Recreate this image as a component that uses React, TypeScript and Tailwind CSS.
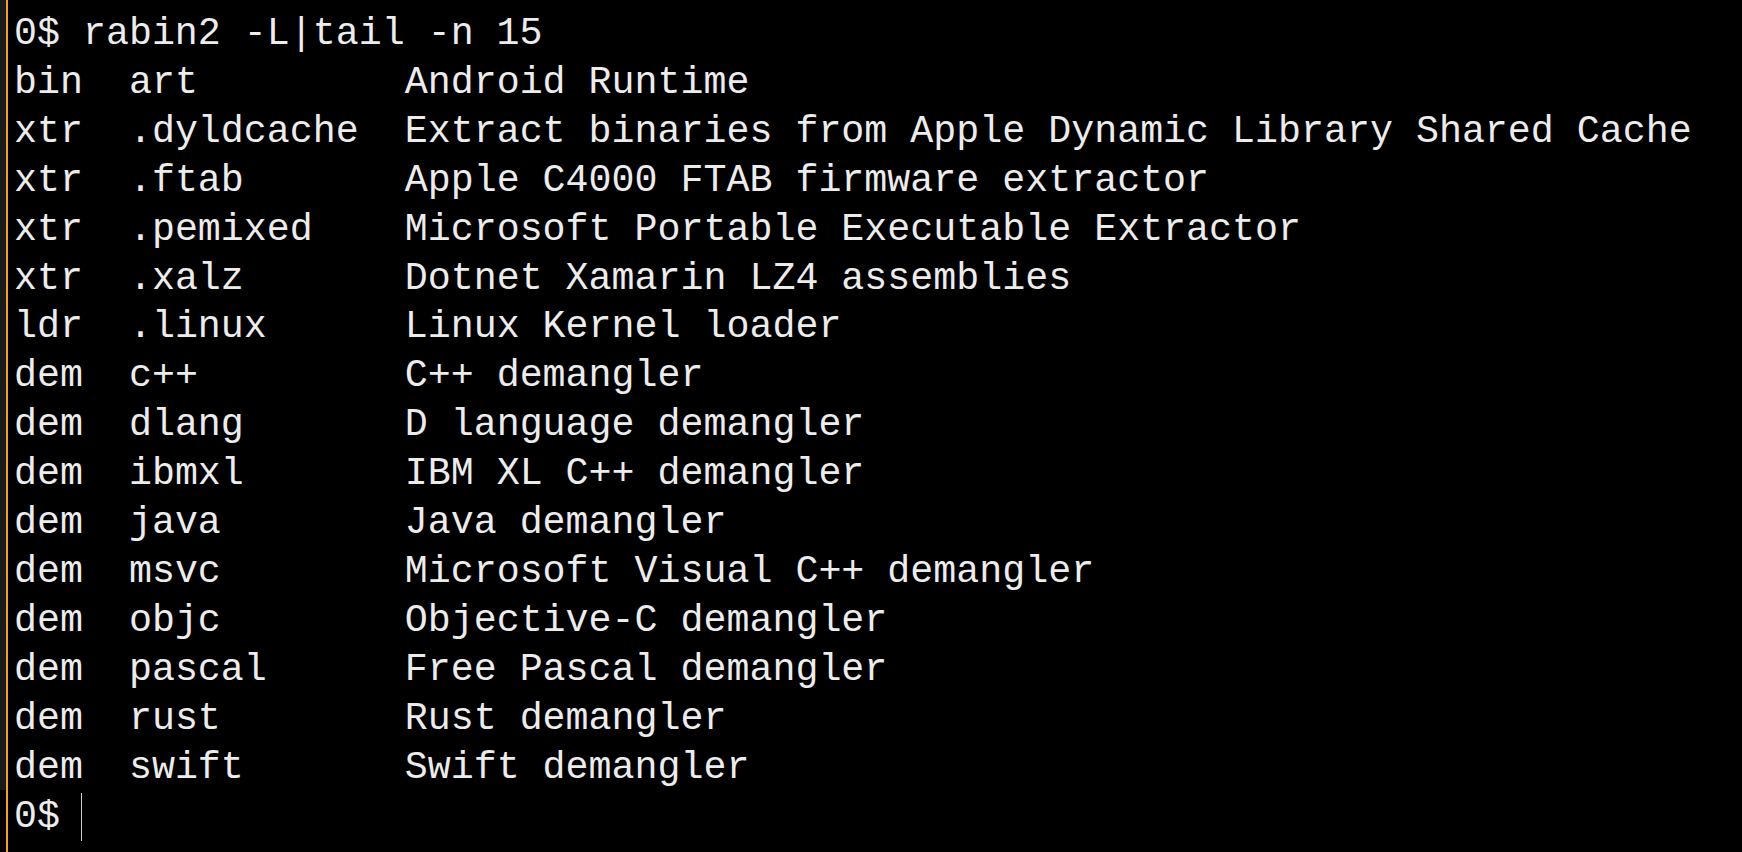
const rows: [string, string, string][] = [
  ["bin", "art", "Android Runtime"],
  ["xtr", ".dyldcache", "Extract binaries from Apple Dynamic Library Shared Cache"],
  ["xtr", ".ftab", "Apple C4000 FTAB firmware extractor"],
  ["xtr", ".pemixed", "Microsoft Portable Executable Extractor"],
  ["xtr", ".xalz", "Dotnet Xamarin LZ4 assemblies"],
  ["ldr", ".linux", "Linux Kernel loader"],
  ["dem", "c++", "C++ demangler"],
  ["dem", "dlang", "D language demangler"],
  ["dem", "ibmxl", "IBM XL C++ demangler"],
  ["dem", "java", "Java demangler"],
  ["dem", "msvc", "Microsoft Visual C++ demangler"],
  ["dem", "objc", "Objective-C demangler"],
  ["dem", "pascal", "Free Pascal demangler"],
  ["dem", "rust", "Rust demangler"],
  ["dem", "swift", "Swift demangler"],
]

export default function App() {
  return (
    <div className="flex h-[852px] w-full overflow-hidden bg-black">
      {/* gutter */}
      <div className="flex w-[6px] shrink-0 flex-col">
        <div className="h-[790px] bg-[#1a1a1a]" />
      </div>
      <div className="w-[2px] shrink-0 bg-[#f0a030]" />

      <div
        className="flex-1 whitespace-pre pl-[6px] pt-[10px] text-[38.3px] leading-[48.9px] text-[#ececec]"
        style={{ fontFamily: '"Liberation Mono", "DejaVu Sans Mono", monospace' }}
      >
        <div>0$ rabin2 -L|tail -n 15</div>
        {rows.map(([kind, name, desc]) => (
          <div key={kind + name}>
            {kind.padEnd(5)}
            {name.padEnd(12)}
            {desc}
          </div>
        ))}
        <div className="flex items-center">
          <span>0$ </span>
          <span className="ml-[-2px] h-[48px] w-[1.5px] bg-[#cfcfcf]" />
        </div>
      </div>
    </div>
  )
}
